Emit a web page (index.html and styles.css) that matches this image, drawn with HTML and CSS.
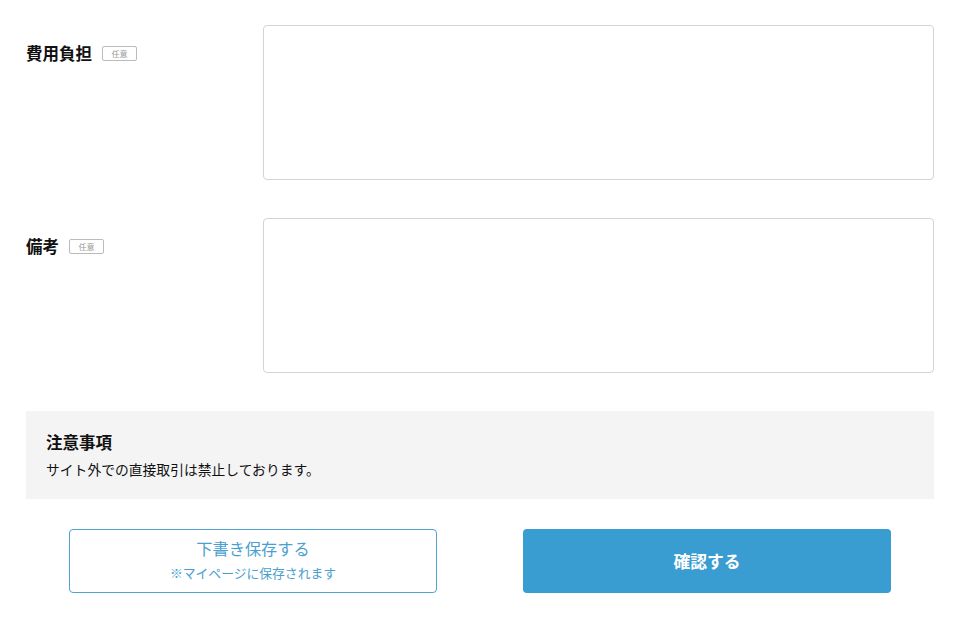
FILE: index.html
```html
<!DOCTYPE html>
<html lang="ja">
<head>
<meta charset="utf-8">
<link rel="stylesheet" href="styles.css">
</head>
<body>
<div class="form">
  <div class="row">
    <div class="label"><span class="label-text">費用負担</span><span class="badge">任意</span></div>
    <textarea class="field"></textarea>
  </div>
  <div class="row">
    <div class="label"><span class="label-text">備考</span><span class="badge">任意</span></div>
    <textarea class="field"></textarea>
  </div>
  <div class="notice">
    <div class="notice-title">注意事項</div>
    <div class="notice-body">サイト外での直接取引は禁止しております。</div>
  </div>
  <div class="actions">
    <div class="action-cell">
      <button class="btn btn-outline"><span class="btn-main">下書き保存する</span><span class="btn-sub">※マイページに保存されます</span></button>
    </div>
    <div class="action-cell">
      <button class="btn btn-primary">確認する</button>
    </div>
  </div>
</div>
</body>
</html>
```
FILE: styles.css
```css
* { box-sizing: border-box; }
html, body { margin: 0; padding: 0; background: #fff; }
body {
  font-family: "Noto Sans CJK JP", "Noto Sans", sans-serif;
  color: #111;
}
.form {
  padding: 25px 30px 0 26px;
  display: flex;
  flex-direction: column;
}
.row {
  display: flex;
  margin-bottom: 38px;
}
.label {
  width: 237px;
  flex: none;
  display: flex;
  align-items: center;
  align-self: flex-start;
  padding-top: 18px;
  height: 38px;
}
.label-text {
  font-size: 16.5px;
  font-weight: 700;
  line-height: 20px;
}
.badge {
  margin-left: 10px;
  width: 35px;
  height: 15px;
  border: 1px solid #bbb;
  border-radius: 2px;
  font-size: 8px;
  line-height: 13px;
  color: #999;
  text-align: center;
}
.field {
  flex: 1;
  height: 155px;
  border: 1px solid #d4d4d4;
  border-radius: 4px;
  resize: none;
  background: #fff;
  font-family: inherit;
}
.notice {
  background: #f4f4f4;
  padding: 19px 20px 20px 20px;
  height: 88px;
}
.notice-title {
  font-size: 16.5px;
  font-weight: 700;
  line-height: 24px;
}
.notice-body {
  font-size: 13.8px;
  line-height: 20px;
  margin-top: 5px;
}
.actions {
  display: grid;
  grid-template-columns: 1fr 1fr;
  margin-top: 30px;
}
.action-cell {
  display: flex;
  justify-content: center;
}
.btn {
  width: 368px;
  height: 64px;
  border-radius: 4px;
  font-family: inherit;
  display: flex;
  flex-direction: column;
  align-items: center;
  justify-content: center;
  cursor: pointer;
}
.btn-outline {
  background: #fff;
  border: 1px solid #4fa3d3;
  color: #4a9fd0;
}
.btn-main {
  font-size: 16.2px;
  line-height: 22px;
  margin-top: -4px;
}
.btn-sub {
  font-size: 12.8px;
  line-height: 18px;
  margin-top: 5px;
}
.btn-primary {
  background: #3a9dd1;
  border: none;
  color: #fff;
  font-size: 16.8px;
  font-weight: 700;
}
```
